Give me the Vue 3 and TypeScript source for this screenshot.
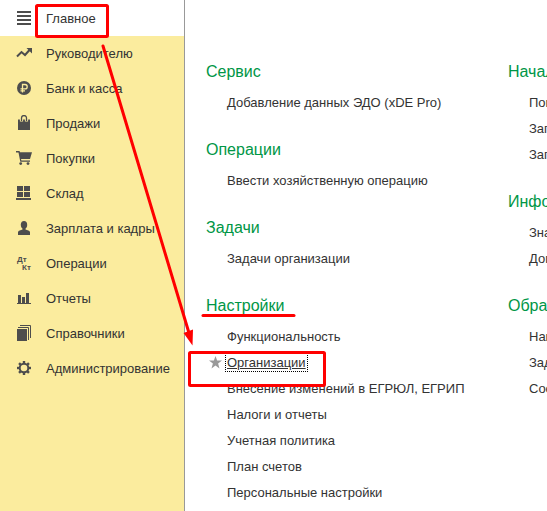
<script setup lang="ts">
interface MenuItem {
  label: string
  icon: string
}

interface Section {
  title: string
  links: string[]
}

const menu: MenuItem[] = [
  { label: 'Главное', icon: 'lines' },
  { label: 'Руководителю', icon: 'trend' },
  { label: 'Банк и касса', icon: 'ruble' },
  { label: 'Продажи', icon: 'bag' },
  { label: 'Покупки', icon: 'cart' },
  { label: 'Склад', icon: 'store' },
  { label: 'Зарплата и кадры', icon: 'person' },
  { label: 'Операции', icon: 'ledger' },
  { label: 'Отчеты', icon: 'chart' },
  { label: 'Справочники', icon: 'books' },
  { label: 'Администрирование', icon: 'gear' },
]

const columns: Section[][] = [
  [
    { title: 'Сервис', links: ['Добавление данных ЭДО (xDE Pro)'] },
    { title: 'Операции', links: ['Ввести хозяйственную операцию'] },
    { title: 'Задачи', links: ['Задачи организации'] },
    {
      title: 'Настройки',
      links: [
        'Функциональность',
        'Организации',
        'Внесение изменений в ЕГРЮЛ, ЕГРИП',
        'Налоги и отчеты',
        'Учетная политика',
        'План счетов',
        'Персональные настройки',
      ],
    },
  ],
  [
    { title: 'Начало', links: ['Помощник', 'Загрузка', 'Загрузка'] },
    { title: 'Информация', links: ['Знакомство', 'Дополнительно'] },
    { title: 'Обратная связь', links: ['Написать', 'Задать', 'Сообщить'] },
  ],
]

const current = 'Главное'
const focused = 'Организации'
const teeth = [0, 45, 90, 135, 180, 225, 270, 315]
</script>

<template>
  <div class="app">
    <nav class="sidebar">
      <a
        v-for="item in menu"
        :key="item.label"
        href="#"
        class="menu-item"
        :class="{ current: item.label === current }"
      >
        <svg class="icon" viewBox="0 0 16 17" aria-hidden="true">
          <path v-if="item.icon === 'lines'" d="M1 1h14v2H1zM1 5h14v2H1zM1 9h14v2H1zM1 13h14v2H1z" />
          <g v-else-if="item.icon === 'trend'">
            <path d="M1 11.500l4.500-4.500 3.500 3 4.500-5" fill="none" stroke="#4d4d4d" stroke-width="2" />
            <path d="M10.500 3H16v5.500z" />
          </g>
          <g v-else-if="item.icon === 'ruble'">
            <circle cx="8" cy="8" r="7" />
            <path d="M6.500 12.500V4.500h2.500a2.200 2.200 0 0 1 0 4.400H4.500M4.500 10.900h4.500" fill="none" stroke="#fbec9e" stroke-width="1.300" />
          </g>
          <g v-else-if="item.icon === 'bag'">
            <path d="M2 4.500h12V15H2z" />
            <path d="M5.500 6.500V3a2.500 2.500 0 0 1 5 0v3.500" fill="none" stroke="#fbec9e" stroke-width="3.200" />
            <path d="M5.500 6V3a2.500 2.500 0 0 1 5 0v3" fill="none" stroke="#4d4d4d" stroke-width="1.300" />
          </g>
          <g v-else-if="item.icon === 'cart'">
            <path d="M0 1h3.500l.5 1.200h12L14 9H5l.4 1.400H14v1.300H4.300L2.500 2.500H0z" />
            <circle cx="4.700" cy="13.600" r="1.400" />
            <circle cx="12" cy="13.600" r="1.400" />
          </g>
          <path v-else-if="item.icon === 'store'" d="M1 1h6v5H1zM8 1h6v5H8zM1 7h6v5H1zM8 7h6v5H8zM0 13h15v2H0z" />
          <g v-else-if="item.icon === 'person'">
            <ellipse cx="8" cy="4.800" rx="3.200" ry="3.900" />
            <path d="M6.500 7h3v2.500l3.500 1.200q1 .5 1 1.500V15H2v-2.800q0-1 1-1.500l3.500-1.200z" />
          </g>
          <g v-else-if="item.icon === 'ledger'" class="ledger">
            <text x="1" y="7">Дт</text>
            <text x="6" y="15">Кт</text>
          </g>
          <path v-else-if="item.icon === 'chart'" d="M2 5h3v8h1V7h3v6h1V3h3v10h2v1H1v-1h1z" />
          <g v-else-if="item.icon === 'books'">
            <path d="M1 4h10v12H1z" />
            <path d="M2 2.500h10.500V15M4 .5h10.500V13" fill="none" stroke="#4d4d4d" />
          </g>
          <g v-else>
            <circle cx="8" cy="8" r="4.300" fill="none" stroke="#4d4d4d" stroke-width="2" />
            <path v-for="angle in teeth" :key="angle" d="M6.800 1h2.400v2.500H6.800z" :transform="`rotate(${angle} 8 8)`" />
          </g>
        </svg>
        <span>{{ item.label }}</span>
      </a>
    </nav>

    <main class="content">
      <div v-for="(column, index) in columns" :key="index" class="column">
        <section v-for="section in column" :key="section.title" class="section">
          <h2>{{ section.title }}</h2>
          <ul>
            <li v-for="(link, position) in section.links" :key="position">
              <svg v-if="link === focused" class="star" viewBox="0 0 12 12" aria-hidden="true">
                <path d="M6 0l1.500 4.200H12L8.400 7 9.700 11.500 6 8.800 2.300 11.500 3.600 7 0 4.200h4.500z" />
              </svg>
              <a href="#" :class="{ focused: link === focused }">{{ link }}</a>
            </li>
          </ul>
        </section>
      </div>
    </main>

    <svg class="marks" width="547" height="511" aria-hidden="true">
      <rect x="36.500" y="5.500" width="71" height="31" rx="1" />
      <path d="M103 46L189 333" />
      <path d="M203 315.500H294" />
      <rect x="189.500" y="352.500" width="135" height="33" rx="1" />
      <path class="tip" d="M192.500 345.500L183.500 333L193 329.500z" />
    </svg>
  </div>
</template>

<style>
body {
  margin: 0;
}
</style>

<style scoped>
.app {
  position: relative;
  display: flex;
  min-height: 100vh;
  overflow: hidden;
  background: #fff;
  color: #333;
  font-family: "Liberation Sans", Arial, sans-serif;
  font-size: 13px;
}

.sidebar {
  box-sizing: border-box;
  flex: 0 0 185px;
  border-right: 1px solid #999;
  background: #fbec9e;
}

.menu-item {
  display: flex;
  align-items: center;
  gap: 14px;
  height: 35px;
  padding-left: 16px;
  color: #333;
  text-decoration: none;
  white-space: nowrap;
}

.menu-item.current {
  padding-top: 1px;
  background: #fff;
}

.icon {
  flex: none;
  width: 16px;
  height: 17px;
  fill: #4d4d4d;
}

.ledger {
  font-size: 8px;
  font-weight: bold;
}

.content {
  display: grid;
  flex: 1;
  grid-template-columns: 302px minmax(0, 1fr);
  min-width: 0;
  padding: 59px 0 0 21px;
}

.column {
  min-width: 0;
  overflow: hidden;
}

.section {
  margin-bottom: 21px;
}

h2 {
  margin: 0 0 5px;
  color: #009646;
  font-size: 16px;
  font-weight: normal;
  line-height: 26px;
  white-space: nowrap;
}

ul {
  margin: 0;
  padding: 0 0 0 21px;
  list-style: none;
}

li {
  position: relative;
  line-height: 26px;
  white-space: nowrap;
}

li a {
  color: #333;
  text-decoration: none;
}

li a.focused {
  outline: 1px dotted #000;
  outline-offset: 1px;
  text-decoration: underline;
}

.star {
  position: absolute;
  top: 6px;
  left: -18px;
  width: 13px;
  height: 13px;
  fill: #999;
}

.marks {
  position: absolute;
  top: 0;
  left: 0;
  fill: none;
  stroke: #f00;
  stroke-width: 3px;
  stroke-linecap: round;
  pointer-events: none;
}

.tip {
  fill: #f00;
  stroke: none;
}
</style>
